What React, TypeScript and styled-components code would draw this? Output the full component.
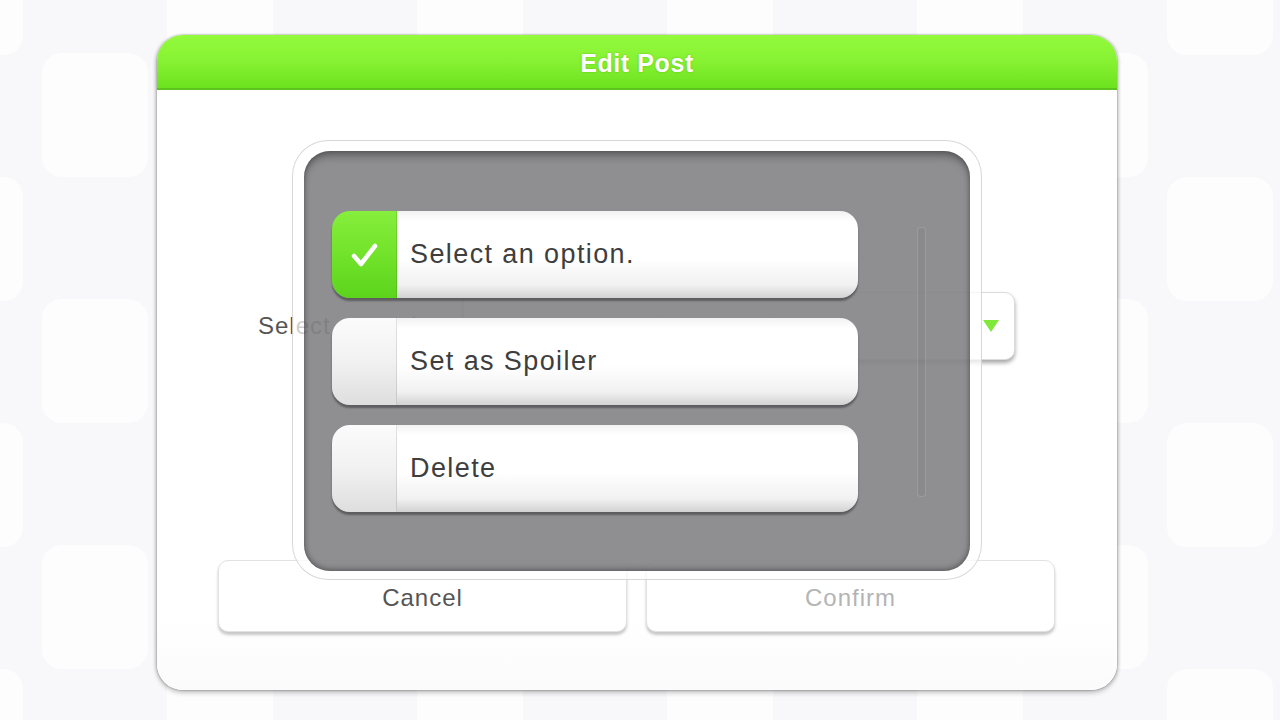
import React from 'react';
import styled, { createGlobalStyle } from 'styled-components';

const GlobalStyle = createGlobalStyle`
  html, body {
    margin: 0;
    padding: 0;
    background: #f8f7f9;
  }
  body {
    font-family: "Liberation Sans", Arial, sans-serif;
  }
`;

const Page = styled.div`
  position: relative;
  width: 1280px;
  height: 720px;
  padding: 35px 0 0 157px;
  box-sizing: border-box;
  overflow: hidden;
  background: #f8f7f9;
`;

const Backdrop = styled.svg`
  position: absolute;
  inset: 0;
  z-index: 0;
`;

const Dialog = styled.div`
  position: relative;
  z-index: 1;
  display: flex;
  flex-direction: column;
  width: 960px;
  height: 655px;
  background: #ffffff;
  border-radius: 26px;
  box-shadow: 0 0 0 1px rgba(0, 0, 0, 0.07), -2px 0 3px rgba(0, 0, 0, 0.12),
    2px 0 3px rgba(0, 0, 0, 0.12), 0 3px 5px rgba(0, 0, 0, 0.22);
`;

const Header = styled.div`
  display: flex;
  align-items: center;
  justify-content: center;
  height: 55px;
  padding-top: 3px;
  box-sizing: border-box;
  border-radius: 26px 26px 0 0;
  background: linear-gradient(#93fa3c 0%, #86f232 50%, #6ce21e 100%);
  border-bottom: 2px solid #5cc41c;
`;

const Title = styled.h1`
  margin: 0;
  font-size: 25px;
  font-weight: bold;
  letter-spacing: 0.6px;
  color: #ffffff;
  text-shadow: 0 0 2px rgba(60, 140, 10, 0.5);
`;

const Body = styled.div`
  flex: 1;
  display: flex;
  flex-direction: column;
  padding: 202px 62px 58px 61px;
  background: linear-gradient(#ffffff 88%, #fbfbfb 100%);
  border-radius: 0 0 26px 26px;
`;

const FormRow = styled.div`
  display: flex;
  align-items: center;
  height: 68px;
  padding: 0 40px;
`;

const FieldLabel = styled.div`
  flex: 1;
  font-size: 24px;
  letter-spacing: 1px;
  color: #555555;
`;

const SelectBox = styled.div`
  position: relative;
  display: flex;
  align-items: center;
  width: 552px;
  height: 68px;
  box-sizing: border-box;
  padding: 0 14px 0 162px;
  background: #ffffff;
  border: 1px solid #dcdcdc;
  border-radius: 4px 10px 10px 4px;
  box-shadow: 0 3px 4px rgba(0, 0, 0, 0.35);
`;

const SelectText = styled.span`
  flex: 1;
  font-size: 22px;
  letter-spacing: 1px;
  color: #c4c4c4;
`;

const Caret = styled.svg`
  width: 18px;
  height: 14px;
`;

const ButtonRow = styled.div`
  display: flex;
  gap: 19px;
  margin-top: auto;
`;

const ActionButton = styled.button<{ $disabled?: boolean }>`
  flex: 1;
  height: 72px;
  border: 1px solid #e2e2e2;
  border-radius: 10px;
  background: #ffffff;
  box-shadow: 0 3px 3px rgba(0, 0, 0, 0.22);
  font-family: "Liberation Sans", Arial, sans-serif;
  font-size: 24px;
  letter-spacing: 1px;
  color: ${(p) => (p.$disabled ? '#b4b4b4' : '#555555')};
  padding: 3px 0 0;
`;

const Popup = styled.div`
  position: absolute;
  left: 135px;
  top: 105px;
  width: 690px;
  height: 440px;
  box-sizing: border-box;
  padding: 10px 11px 8px 11px;
  border-radius: 36px;
  border: 1px solid rgba(190, 190, 190, 0.6);
  background: rgba(255, 255, 255, 0.72);
  z-index: 2;
`;

const PopupPanel = styled.div`
  display: flex;
  align-items: flex-start;
  gap: 59px;
  height: 100%;
  box-sizing: border-box;
  padding: 60px 0 0 28px;
  border-radius: 26px;
  background: rgba(96, 94, 98, 0.7);
  box-shadow: inset 0 9px 10px -5px rgba(0, 0, 0, 0.4),
    inset 0 -5px 6px -3px rgba(0, 0, 0, 0.3), inset 4px 0 6px -4px rgba(0, 0, 0, 0.3),
    inset -4px 0 6px -4px rgba(0, 0, 0, 0.3);
`;

const OptionList = styled.div`
  display: flex;
  flex-direction: column;
  gap: 20px;
`;

const Option = styled.div`
  display: flex;
  width: 526px;
  height: 87px;
  border-radius: 18px;
  overflow: hidden;
  box-shadow: 0 3px 2px rgba(0, 0, 0, 0.35);
`;

const OptionMark = styled.div<{ $checked?: boolean }>`
  display: flex;
  align-items: center;
  justify-content: center;
  width: 64px;
  border-right: 1px solid rgba(0, 0, 0, 0.1);
  background: ${(p) =>
    p.$checked
      ? 'linear-gradient(#86ee3c 0%, #74e42c 45%, #5cd41c 100%)'
      : 'linear-gradient(#fbfbfb 0%, #f1f1f1 50%, #dedede 100%)'};
`;

const OptionLabel = styled.div`
  flex: 1;
  display: flex;
  align-items: center;
  padding: 0 0 0 13px;
  font-size: 27px;
  letter-spacing: 1.4px;
  color: #3e3e3e;
  background: linear-gradient(#f2f2f2 0%, #ffffff 12%, #ffffff 55%, #f1f1f1 85%, #d2d2d2 100%);
`;

const ScrollTrack = styled.div`
  width: 7px;
  height: 268px;
  margin-top: 16px;
  border-radius: 4px;
  border: 1px solid rgba(255, 255, 255, 0.14);
  background: rgba(0, 0, 0, 0.03);
`;

const Check = () => (
  <svg width="28" height="26" viewBox="0 0 28 26">
    <path
      d="M4 14 L11 22 L25 4"
      fill="none"
      stroke="#ffffff"
      strokeWidth="4.5"
      strokeLinecap="round"
      strokeLinejoin="round"
    />
  </svg>
);

const options = [
  { label: 'Select an option.', checked: true },
  { label: 'Set as Spoiler', checked: false },
  { label: 'Delete', checked: false },
];

const App = () => (
  <Page>
    <GlobalStyle />
    <Backdrop width="1280" height="720">
      <defs>
        <pattern id="tiles" width="250" height="246" patternUnits="userSpaceOnUse" x="-83" y="-69">
          <rect x="125" y="122" width="106" height="124" rx="20" fill="#fdfdfe" />
          <rect x="0" y="0" width="106" height="124" rx="20" fill="#fdfdfe" />
        </pattern>
      </defs>
      <rect width="1280" height="720" fill="url(#tiles)" />
    </Backdrop>
    <Dialog>
      <Header>
        <Title>Edit Post</Title>
      </Header>
      <Body>
        <FormRow>
          <FieldLabel>Select an option</FieldLabel>
          <SelectBox>
            <SelectText>Select an option</SelectText>
            <Caret viewBox="0 0 18 14">
              <path d="M1 1 L17 1 L9 13 Z" fill="#7fe83a" />
            </Caret>
          </SelectBox>
        </FormRow>
        <ButtonRow>
          <ActionButton>Cancel</ActionButton>
          <ActionButton $disabled>Confirm</ActionButton>
        </ButtonRow>
      </Body>
      <Popup>
        <PopupPanel>
          <OptionList>
            {options.map((o) => (
              <Option key={o.label}>
                <OptionMark $checked={o.checked}>{o.checked && <Check />}</OptionMark>
                <OptionLabel>{o.label}</OptionLabel>
              </Option>
            ))}
          </OptionList>
          <ScrollTrack />
        </PopupPanel>
      </Popup>
    </Dialog>
  </Page>
);

export default App;
